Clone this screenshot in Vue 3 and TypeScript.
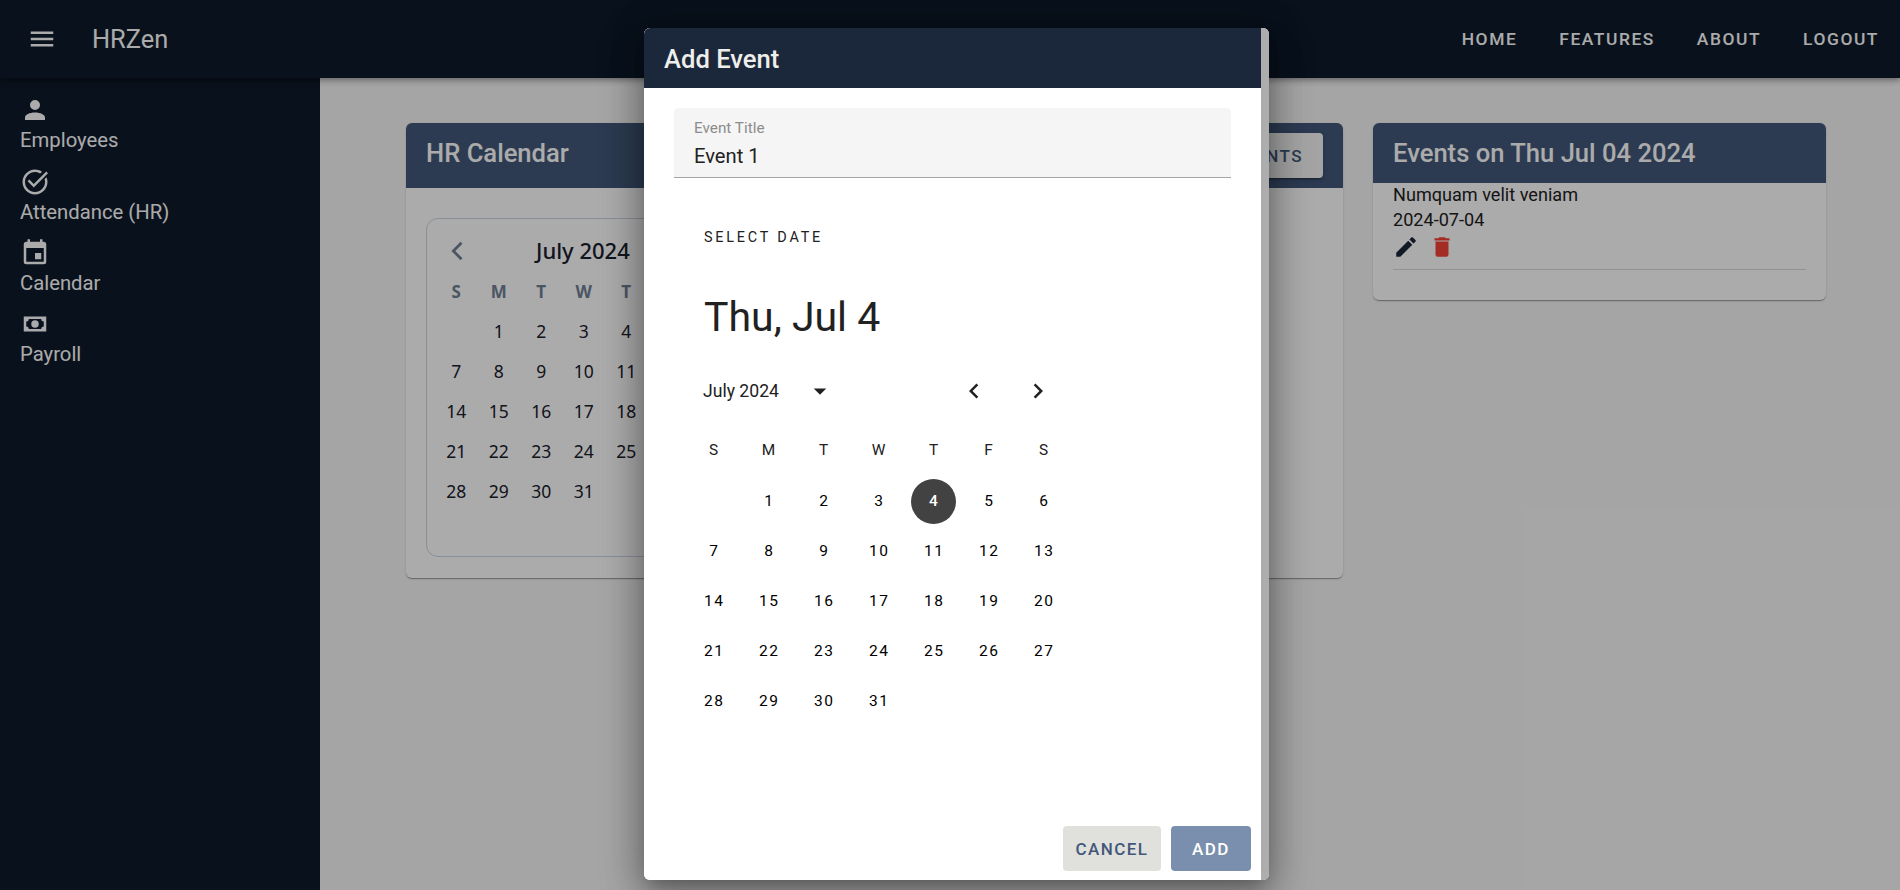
<script setup lang="ts">
const navLinks: string[] = ['HOME', 'FEATURES', 'ABOUT', 'LOGOUT']
const weekdays: string[] = ['S', 'M', 'T', 'W', 'T', 'F', 'S']
const blanks = 1
const days: number[] = Array.from({ length: 31 }, (_, i) => i + 1)
// Only the first five columns of the background calendar are not covered by the dialog.
const visibleWeekdays = weekdays.slice(0, 5)
const visibleCells: (number | null)[] = [null, ...days].filter((_, i) => i % 7 < 5)
const side = [
  { label: 'Employees', d: 'M12,4A4,4 0 0,1 16,8A4,4 0 0,1 12,12A4,4 0 0,1 8,8A4,4 0 0,1 12,4M12,14C16.42,14 20,15.79 20,18V20H4V18C4,15.79 7.58,14 12,14Z' },
  { label: 'Attendance (HR)', d: 'M12 2C6.5 2 2 6.5 2 12S6.5 22 12 22 22 17.5 22 12C22 10.7 21.7 9.4 21.2 8.2L19.6 9.8C19.9 10.5 20 11.2 20 12 20 16.4 16.4 20 12 20S4 16.4 4 12 7.6 4 12 4C13.6 4 15 4.5 16.2 5.2L17.6 3.8C16 2.7 14.1 2 12 2M21 3.5L11 13.5 7.5 10 6.1 11.4 11 16.3 22.4 4.9 21 3.5Z' },
  { label: 'Calendar', d: 'M19,19H5V8H19M16,1V3H8V1H6V3H5C3.89,3 3,3.89 3,5V19A2,2 0 0,0 5,21H19A2,2 0 0,0 21,19V5C21,3.89 20.1,3 19,3H18V1M17,12H12V17H17V12Z' },
  { label: 'Payroll', d: 'M3,6H21V18H3V6M12,9A3,3 0 0,1 15,12A3,3 0 0,1 12,15A3,3 0 0,1 9,12A3,3 0 0,1 12,9M7,8A2,2 0 0,1 5,10V14A2,2 0 0,1 7,16H17A2,2 0 0,1 19,14V10A2,2 0 0,1 17,8H7Z' },
]
</script>

<template>
  <div class="app">
    <header class="topbar">
      <svg class="burger" viewBox="0 0 24 24"><path d="M3,6H21V8H3V6M3,11H21V13H3V11M3,16H21V18H3V16Z" /></svg>
      <div class="brand">HRZen</div>
      <nav class="links">
        <a v-for="l in navLinks" :key="l" class="link">{{ l }}</a>
      </nav>
    </header>
    <div class="body">
      <aside class="sidebar">
        <div v-for="s in side" :key="s.label" class="side-item">
          <svg class="side-icon" viewBox="0 0 24 24">
            <path :d="s.d" fill-rule="evenodd" />
          </svg>
          <span class="side-label">{{ s.label }}</span>
        </div>
      </aside>
      <main class="main">
        <section class="card cal-card">
          <div class="card-head tall">
            <h2 class="card-title">HR Calendar</h2>
            <button class="events-btn"><span class="btn-tail">NTS</span></button>
          </div>
          <div class="cal-wrap">
            <div class="vcal">
              <div class="vcal-head">
                <svg class="vcal-chev" viewBox="0 0 24 24"><path d="M15 5L8 12L15 19" /></svg>
                <span class="vcal-title">July 2024</span>
              </div>
              <div class="vcal-grid">
                <span v-for="(w, i) in visibleWeekdays" :key="'w' + i" class="vcal-wd">{{ w }}</span>
                <span v-for="(d, i) in visibleCells" :key="'c' + i" class="vcal-day">{{ d }}</span>
              </div>
            </div>
          </div>
        </section>
        <section class="card ev-card">
          <div class="card-head">
            <h2 class="card-title">Events on Thu Jul 04 2024</h2>
          </div>
          <div class="ev-body">
            <div class="ev-line">Numquam velit veniam</div>
            <div class="ev-line">2024-07-04</div>
            <div class="ev-actions">
              <svg class="ev-icon pencil" viewBox="0 0 24 24"><path d="M20.71,7.04C21.1,6.65 21.1,6 20.71,5.63L18.37,3.29C18,2.9 17.35,2.9 16.96,3.29L15.12,5.12L18.87,8.87M3,17.25V21H6.75L17.81,9.93L14.06,6.18L3,17.25Z" /></svg>
              <svg class="ev-icon trash" viewBox="0 0 24 24"><path d="M19,4H15.5L14.5,3H9.5L8.5,4H5V6H19M6,19A2,2 0 0,0 8,21H16A2,2 0 0,0 18,19V7H6V19Z" /></svg>
            </div>
            <div class="ev-div"></div>
          </div>
        </section>
      </main>
    </div>

    <div class="scrim">
      <div class="dialog">
        <div class="dialog-card">
          <div class="dialog-head">Add Event</div>
          <div class="dialog-body">
            <div class="field">
              <span class="field-label">Event Title</span>
              <span class="field-value">Event 1</span>
            </div>
            <div class="picker">
              <div class="pk-select">SELECT DATE</div>
              <div class="pk-date">Thu, Jul 4</div>
              <div class="pk-controls">
                <span class="pk-month">July 2024</span>
                <svg class="pk-caret" viewBox="0 0 24 24"><path d="M7,10L12,15L17,10H7Z" /></svg>
                <svg class="pk-nav first" viewBox="0 0 24 24"><path d="M15.41,16.58L10.83,12L15.41,7.41L14,6L8,12L14,18L15.41,16.58Z" /></svg>
                <svg class="pk-nav" viewBox="0 0 24 24"><path d="M8.59,16.58L13.17,12L8.59,7.41L10,6L16,12L10,18L8.59,16.58Z" /></svg>
              </div>
              <div class="pk-grid">
                <span v-for="(w, i) in weekdays" :key="'pw' + i" class="pk-wd">{{ w }}</span>
                <span v-for="b in blanks" :key="'pb' + b"></span>
                <span v-for="d in days" :key="'p' + d" class="pk-day"><span class="pk-num" :class="{ sel: d === 4 }">{{ d }}</span></span>
              </div>
            </div>
          </div>
          <div class="dialog-actions">
            <button class="btn cancel">CANCEL</button>
            <button class="btn add">ADD</button>
          </div>
        </div>
        <div class="scrollbar"></div>
      </div>
    </div>
  </div>
</template>

<style>
html, body { margin: 0; padding: 0; overflow: hidden; }
</style>

<style scoped>
.app {
  position: relative;
  width: 1900px;
  height: 890px;
  overflow: hidden;
  background: #f7f7f7;
  font-family: Roboto, sans-serif;
  color: #212121;
  display: flex;
  flex-direction: column;
}
.topbar {
  height: 78px;
  flex: none;
  background: #0e1a2b;
  display: flex;
  align-items: center;
  padding-left: 27px;
  padding-right: 21px;
  color: #fff;
  box-shadow: 0 2px 4px -1px rgba(0,0,0,.2), 0 4px 5px rgba(0,0,0,.14), 0 1px 10px rgba(0,0,0,.12);
  z-index: 2;
}
.burger { width: 30px; height: 30px; fill: #fff; flex: none; }
.brand { margin-left: 35px; font-size: 25.4px; font-weight: 400; }
.links { margin-left: auto; display: flex; gap: 42px; }
.link { font-size: 17.4px; font-weight: 500; letter-spacing: 1.55px; }
.body { flex: 1; display: flex; min-height: 0; }
.sidebar {
  width: 320px;
  flex: none;
  background: #0e1a2b;
  color: #fff;
  padding: 17px 0 0 20px;
  box-sizing: border-box;
}
.side-item { display: flex; flex-direction: column; align-items: flex-start; }
.side-icon { width: 30px; height: 30px; fill: #fff; display: block; }
.side-label { font-size: 20.3px; line-height: 30px; }
.side-item + .side-item { margin-top: 11px; }
.side-item:nth-child(2) { margin-top: 12px; }
.main {
  flex: 1;
  display: flex;
  align-items: flex-start;
  gap: 30px;
  padding: 45px 73px 0 86px;
  min-width: 0;
}
.card {
  background: #fff;
  border-radius: 6px;
  overflow: hidden;
  box-shadow: 0 2px 1px -1px rgba(0,0,0,.2), 0 1px 1px rgba(0,0,0,.14), 0 1px 3px rgba(0,0,0,.12);
}
.cal-card { width: 937px; height: 455px; flex: none; }
.ev-card { width: 453px; height: 177px; flex: none; }
.card-head {
  background: #42587a;
  height: 60px;
  display: flex;
  align-items: center;
  justify-content: space-between;
  padding: 0 20px;
  color: #fff;
}
.card-head.tall { height: 65px; }
.card-head.tall .card-title { margin-bottom: 5px; }
.card-title { margin: 0; font-size: 25.6px; font-weight: 500; }
.events-btn {
  height: 45px;
  width: 150px;
  border: 0;
  border-radius: 4px;
  background: #f5f5f5;
  color: #42587a;
  font: 500 17px Roboto, sans-serif;
  letter-spacing: 1.45px;
  text-align: right;
  padding: 0 20px 0 0;
  box-shadow: 0 3px 1px -2px rgba(0,0,0,.2), 0 2px 2px rgba(0,0,0,.14), 0 1px 5px rgba(0,0,0,.12);
}
.cal-wrap { padding: 30px 20px 0; }
.vcal {
  width: 420px;
  height: 339px;
  box-sizing: border-box;
  border: 1px solid #cbd5e0;
  border-radius: 12px;
  padding: 12px 0 0 8px;
  font-family: "Noto Sans", sans-serif;
}
.vcal-head { position: relative; height: 40px; display: flex; align-items: center; }
.vcal-chev { width: 28px; height: 28px; fill: none; stroke: #718096; stroke-width: 2.4; margin-left: 9px; }
.vcal-title { position: absolute; left: 101px; top: 4px; font-size: 22px; font-weight: 500; color: #1a202c; white-space: nowrap; }
.vcal-grid { display: grid; grid-template-columns: repeat(5, 42.5px); grid-auto-rows: 40px; align-items: center; justify-items: center; }
.vcal-wd { font-size: 17px; font-weight: 700; color: #718096; }
.vcal-day { font-size: 17.5px; font-weight: 400; color: #1a202c; }
.ev-body { padding: 0 20px; font-size: 18.1px; line-height: 25px; }
.ev-line { color: #212121; }
.ev-line:first-child { margin-top: -1px; }
.ev-actions { display: flex; gap: 10px; margin-top: 2px; }
.ev-icon { width: 26px; height: 26px; }
.pencil { fill: #1a2639; }
.trash { fill: #f44336; }
.ev-div { margin-top: 9px; height: 1px; background: #dcdcdc; }
.scrim {
  position: absolute;
  inset: 0;
  z-index: 5;
  background: rgba(0,0,0,.33);
  padding: 28px 0 0 644px;
  box-sizing: border-box;
}
.dialog {
  width: 625px;
  height: 852px;
  display: flex;
  background: #fff;
  border-radius: 6px;
  overflow: hidden;
  box-shadow: 0 11px 15px -7px rgba(0,0,0,.2), 0 24px 38px 3px rgba(0,0,0,.14), 0 9px 46px 8px rgba(0,0,0,.12), 0 0 30px 4px rgba(0,0,0,.18);
}
.dialog-card { width: 617px; flex: none; display: flex; flex-direction: column; background: #fff; }
.scrollbar { flex: 1; background: #adadad; }
.dialog-head {
  height: 60px;
  flex: none;
  box-sizing: border-box;
  background: #1b273b;
  color: #eeeeea;
  display: flex;
  align-items: center;
  padding: 2px 0 0 20px;
  font-size: 25.6px;
  font-weight: 500;
}
.dialog-body { flex: 1; padding: 20px 30px 0; }
.field {
  height: 70px;
  box-sizing: border-box;
  background: #f5f5f5;
  border-radius: 4px 4px 0 0;
  border-bottom: 1px solid #a5a5a5;
  padding: 11px 20px 0;
  display: flex;
  flex-direction: column;
}
.field-label { font-size: 15.3px; line-height: 18px; color: #8c8c8c; }
.field-value { font-size: 20.2px; line-height: 28px; margin-top: 5px; color: #212121; }
.picker { padding: 51px 0 0 30px; }
.pk-select { font-size: 14.4px; letter-spacing: 2.8px; line-height: 18px; color: #212121; }
.pk-date { font-size: 41px; line-height: 50px; margin-top: 45px; color: #212121; }
.pk-controls { display: flex; align-items: center; height: 30px; margin-top: 34px; }
.pk-month { font-size: 17.6px; color: #212121; margin-left: -1px; width: 102px; }
.pk-caret { width: 30px; height: 30px; fill: #212121; }
.pk-nav { width: 30px; height: 30px; fill: #212121; margin-left: 34px; }
.pk-nav.first { margin-left: 124px; }
.pk-grid { margin-top: 20px; margin-left: -18px; display: grid; grid-template-columns: repeat(7, 55px); grid-template-rows: 50px; grid-auto-rows: 50px; justify-items: center; align-items: center; }
.pk-wd { font-size: 15.4px; color: #212121; padding-bottom: 3px; }
.pk-day { display: flex; align-items: center; justify-content: center; }
.pk-num { width: 45px; height: 45px; box-sizing: border-box; padding-left: 1.7px; border-radius: 50%; display: flex; align-items: center; justify-content: center; font-size: 15.5px; font-weight: 400; letter-spacing: 1.7px; color: #000; }
.pk-num.sel { background: #424242; color: #fff; font-weight: 500; }
.dialog-actions { display: flex; justify-content: flex-end; gap: 10px; padding: 0 10px 9px 0; }
.btn { height: 45px; border: 0; border-radius: 4px; font: 500 17px Roboto, sans-serif; letter-spacing: 1.45px; }
.cancel { width: 98px; background: #e0e1dd; color: #42587a; }
.add { width: 80px; background: #7a8fad; color: #fff; }
</style>
